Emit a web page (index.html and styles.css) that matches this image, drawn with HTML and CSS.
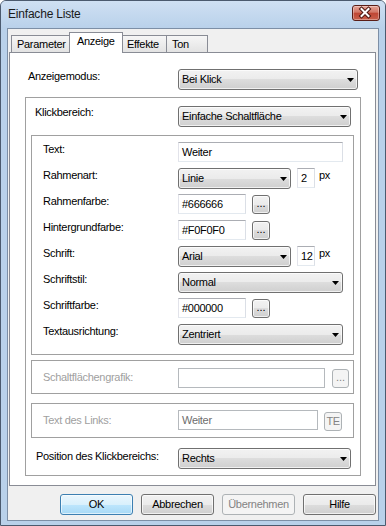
FILE: index.html
```html
<!DOCTYPE html>
<html lang="de">
<head>
    <meta charset="UTF-8">
    <title>Einfache Liste</title>
    <link rel="stylesheet" href="styles.css">
</head>
<body>
    <div class="window">
        <div class="titlebar">
            <span class="title">Einfache Liste</span>
            <div class="close-btn">
                <svg width="26" height="14" viewBox="0 0 26 14">
                    <path d="M8.5 3 L15.5 10 M15.5 3 L8.5 10" stroke="#4a1510" stroke-width="4" stroke-linecap="square" fill="none"/>
                    <path d="M8.5 3 L15.5 10 M15.5 3 L8.5 10" stroke="#ffffff" stroke-width="2" stroke-linecap="square" fill="none"/>
                </svg>
            </div>
        </div>

        <div class="client">
            <div class="tabs">
                <div class="tab tab-param">Parameter</div>
                <div class="tab active">Anzeige</div>
                <div class="tab tab-fx">Effekte</div>
                <div class="tab tab-ton">Ton</div>
            </div>

            <div class="panel">
                <div class="row">
                    <span class="lbl lbl-top">Anzeigemodus:</span>
                    <div class="combo combo-mode">Bei Klick</div>
                </div>

                <div class="group group-click">
                    <div class="row">
                        <span class="lbl lbl-click">Klickbereich:</span>
                        <div class="combo combo-area">Einfache Schaltfläche</div>
                    </div>

                    <div class="group group-style">
                        <div class="row row-26">
                            <span class="lbl lbl-inner">Text:</span>
                            <div class="field field-text">Weiter</div>
                        </div>
                        <div class="row row-26">
                            <span class="lbl lbl-inner">Rahmenart:</span>
                            <div class="combo combo-short">Linie</div>
                            <div class="field field-num">2</div>
                            <span class="unit">px</span>
                        </div>
                        <div class="row row-26">
                            <span class="lbl lbl-inner">Rahmenfarbe:</span>
                            <div class="field field-color">#666666</div>
                            <div class="btn-dots">...</div>
                        </div>
                        <div class="row row-26">
                            <span class="lbl lbl-inner">Hintergrundfarbe:</span>
                            <div class="field field-color">#F0F0F0</div>
                            <div class="btn-dots">...</div>
                        </div>
                        <div class="row row-26">
                            <span class="lbl lbl-inner">Schrift:</span>
                            <div class="combo combo-short">Arial</div>
                            <div class="field field-num">12</div>
                            <span class="unit">px</span>
                        </div>
                        <div class="row row-26">
                            <span class="lbl lbl-inner">Schriftstil:</span>
                            <div class="combo combo-long">Normal</div>
                        </div>
                        <div class="row row-26">
                            <span class="lbl lbl-inner">Schriftfarbe:</span>
                            <div class="field field-color">#000000</div>
                            <div class="btn-dots">...</div>
                        </div>
                        <div class="row row-26">
                            <span class="lbl lbl-inner">Textausrichtung:</span>
                            <div class="combo combo-long">Zentriert</div>
                        </div>
                    </div>

                    <div class="group group-sub group-img">
                        <div class="row">
                            <span class="lbl lbl-inner lbl-off lbl-img">Schaltflächengrafik:</span>
                            <div class="field field-off field-img"></div>
                            <div class="btn-dots btn-off btn-img">...</div>
                        </div>
                    </div>

                    <div class="group group-sub group-link">
                        <div class="row">
                            <span class="lbl lbl-inner lbl-off lbl-link">Text des Links:</span>
                            <div class="field field-off field-link">Weiter</div>
                            <div class="btn-dots btn-off btn-te">TE</div>
                        </div>
                    </div>

                    <div class="row row-pos">
                        <span class="lbl lbl-pos">Position des Klickbereichs:</span>
                        <div class="combo combo-area">Rechts</div>
                    </div>
                </div>
            </div>

            <div class="footer">
                <div class="btn btn-default">OK</div>
                <div class="btn">Abbrechen</div>
                <div class="btn btn-off">Übernehmen</div>
                <div class="btn">Hilfe</div>
            </div>
        </div>
    </div>
</body>
</html>
```

FILE: styles.css
```css
body {
    margin: 0;
    background-color: #ffffff;
    font-family: "Liberation Sans", Arial, sans-serif;
    font-size: 11px;
    line-height: 13px;
    letter-spacing: -0.3px;
    color: #000000;
}

/* window frame */
.window {
    width: 386px;
    height: 526px;
    box-sizing: border-box;
    border: 1px solid #4b5a6e;
    border-radius: 6px 6px 0 0;
    background-color: #b9d1ea;
    padding: 0 6px 4px 6px;
}
.titlebar {
    height: 27px;
    margin: 0 -6px;
    padding: 0 5px 0 7px;
    display: flex;
    justify-content: space-between;
    align-items: flex-start;
    background: linear-gradient(#cfe0f3, #b9d1ea);
    border-radius: 5px 5px 0 0;
}
.title {
    padding-top: 6px;
    font-size: 12px;
    line-height: 15px;
    letter-spacing: -0.2px;
    color: #1a1a1a;
}
.close-btn {
    margin-top: 4px;
    width: 28px;
    height: 16px;
    box-sizing: border-box;
    border: 1px solid #5a1d17;
    border-radius: 3px;
    background: linear-gradient(#e6a396, #d27666 45%, #bf4634 50%, #c9604c);
    box-shadow: inset 0 0 0 1px rgba(255,255,255,0.35);
}
.close-btn svg {
    display: block;
}

.client {
    height: 493px;
    box-sizing: border-box;
    border: 1px solid #7d8fa6;
    background-color: #f0f0f0;
    padding-left: 1px;
}

/* tabs */
.tabs {
    height: 23px;
    padding-left: 2px;
    display: flex;
    align-items: flex-end;
}
.tab {
    height: 17px;
    box-sizing: border-box;
    border: 1px solid #898c95;
    border-bottom: none;
    padding: 2px 0 0 5px;
    background: linear-gradient(#f6f6f6, #e3e3e3);
    white-space: nowrap;
}
.tab-param {
    width: 60px;
}
.tab-fx {
    width: 46px;
}
.tab-ton {
    width: 42px;
    margin-left: -1px;
}
.tab.active {
    position: relative;
    z-index: 1;
    width: 54px;
    height: 21px;
    margin: 0 -2px -1px -2px;
    padding-left: 7px;
    background: #ffffff;
}

.panel {
    position: relative;
    width: 367px;
    height: 434px;
    box-sizing: border-box;
    border: 1px solid #898c95;
    background-color: #ffffff;
    padding: 16px 0 0 15px;
}

/* rows and labels */
.row {
    display: flex;
    align-items: flex-start;
}
.row-26 {
    height: 26px;
}
.lbl {
    flex: none;
    box-sizing: border-box;
    white-space: nowrap;
    padding-top: 1px;
}
.lbl-top {
    width: 153px;
    padding-left: 3px;
}
.lbl-click {
    width: 152px;
    padding-left: 9px;
    padding-top: 0;
}
.lbl-inner {
    width: 146px;
    padding-left: 11px;
}
.lbl-pos {
    width: 152px;
    padding-left: 10px;
    padding-top: 2px;
}
.lbl-off {
    color: #a0a0a0;
}
.lbl-img {
    padding-top: 3px;
}
.lbl-link {
    padding-top: 4px;
}
.unit {
    margin-left: 4px;
    padding-top: 1px;
}

/* group boxes */
.group {
    box-sizing: border-box;
    border: 1px solid #a0a0a0;
}
.group-click {
    width: 336px;
    margin-top: 7px;
    padding: 8px 0 6px 0;
}
.group-style {
    width: 323px;
    margin: 8px 0 0 5px;
    padding: 6px 0 4px 0;
}
.group-sub {
    width: 323px;
    margin-left: 5px;
}
.group-img {
    margin-top: 5px;
    padding: 7px 0 5px 0;
}
.group-link {
    margin-top: 9px;
    padding: 6px 0 6px 0;
}
.row-pos {
    margin-top: 10px;
}

/* combo boxes */
.combo {
    position: relative;
    flex: none;
    height: 21px;
    box-sizing: border-box;
    border: 1px solid #707070;
    border-radius: 3px;
    background: linear-gradient(#f2f2f2, #ebebeb 50%, #dddddd 50%, #cfcfcf);
    box-shadow: inset 0 0 0 1px rgba(255,255,255,0.7);
    padding: 3px 0 0 3px;
    white-space: nowrap;
}
.combo::after {
    content: "";
    position: absolute;
    right: 3px;
    top: 8px;
    width: 7px;
    height: 4px;
    background-color: #000000;
    clip-path: polygon(0 0, 100% 0, 50% 100%);
}
.combo-mode {
    width: 180px;
}
.combo-area {
    width: 173px;
}
.combo-short {
    width: 113px;
}
.combo-long {
    width: 165px;
}

/* text fields */
.field {
    flex: none;
    height: 20px;
    box-sizing: border-box;
    border: 1px solid;
    border-color: #abadb3 #dbdfe6 #e3e9ef #e2e3ea;
    background-color: #ffffff;
    padding: 3px 0 0 3px;
    white-space: nowrap;
}
.field-text {
    width: 165px;
}
.field-num {
    width: 18px;
    margin-left: 6px;
}
.field-color {
    width: 68px;
}
.field-off {
    border-color: #b5b9bd;
    color: #6d6d6d;
}
.field-img {
    width: 147px;
}
.field-link {
    width: 140px;
}

/* small buttons */
.btn-dots {
    flex: none;
    width: 18px;
    height: 19px;
    margin: 1px 0 0 6px;
    box-sizing: border-box;
    border: 1px solid #707070;
    border-radius: 3px;
    background: linear-gradient(#f2f2f2, #ebebeb 50%, #dddddd 50%, #cfcfcf);
    box-shadow: inset 0 0 0 1px rgba(255,255,255,0.7);
    padding-top: 1px;
    text-align: center;
    letter-spacing: 0;
}
.btn-off {
    border-color: #adb2b5;
    background: #f4f4f4;
    box-shadow: none;
    color: #838383;
}
.btn-img {
    width: 17px;
    margin-left: 7px;
}
.btn-te {
    margin-top: 2px;
    padding-top: 2px;
    letter-spacing: -0.5px;
}

/* dialog buttons */
.footer {
    width: 367px;
    margin-top: 8px;
    display: flex;
    justify-content: flex-end;
    gap: 8px;
}
.btn {
    width: 73px;
    height: 21px;
    box-sizing: border-box;
    border: 1px solid #707070;
    border-radius: 3px;
    background: linear-gradient(#f2f2f2, #ebebeb 50%, #dddddd 50%, #cfcfcf);
    box-shadow: inset 0 0 0 1px rgba(255,255,255,0.7);
    padding-top: 3px;
    text-align: center;
}
.btn-default {
    border-color: #3c7fb1;
    background: linear-gradient(#eaf6fd, #d9f0fc 50%, #bee6fd 50%, #a7d9f5);
    box-shadow: inset 0 0 0 1px rgba(255,255,255,0.6);
}
.btn.btn-off {
    border-color: #adb2b5;
    background: #f4f4f4;
    box-shadow: none;
    color: #838383;
}
```
